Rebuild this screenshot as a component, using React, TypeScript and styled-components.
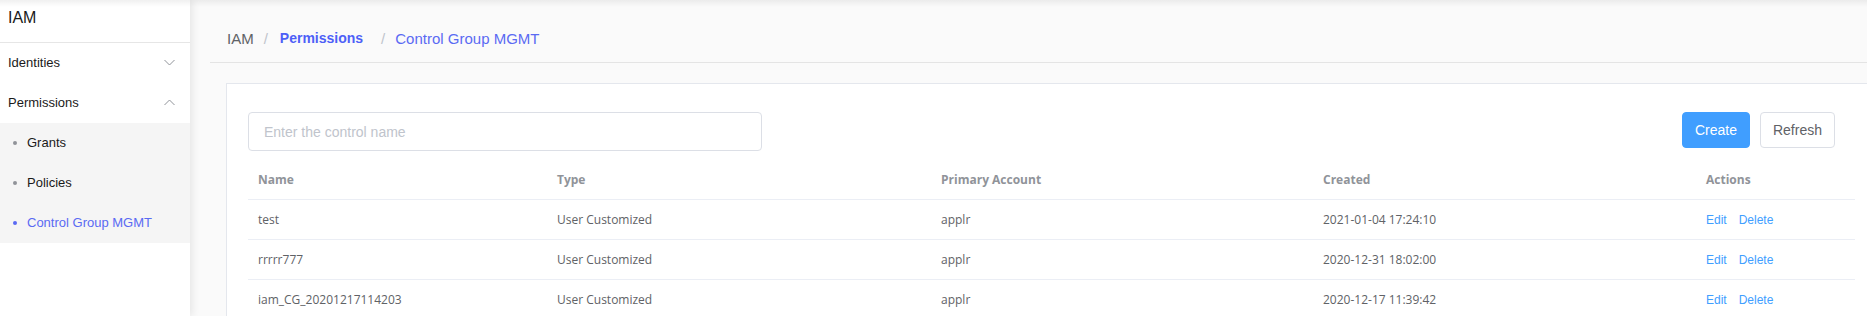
import styled, { createGlobalStyle } from "styled-components";

const GlobalStyle = createGlobalStyle`
  html, body {
    margin: 0;
    padding: 0;
    background: #fafafa;
    overflow: hidden;
  }
  * {
    box-sizing: border-box;
  }
`;

const rows = [
  { name: "test", type: "User Customized", account: "applr", created: "2021-01-04 17:24:10" },
  { name: "rrrrr777", type: "User Customized", account: "applr", created: "2020-12-31 18:02:00" },
  { name: "iam_CG_20201217114203", type: "User Customized", account: "applr", created: "2020-12-17 11:39:42" },
];

function Chevron({ up }: { up?: boolean }) {
  return (
    <svg width="11" height="7" viewBox="0 0 11 7">
      <polyline
        points={up ? "0.5,6 5.5,1 10.5,6" : "0.5,1 5.5,6 10.5,1"}
        fill="none"
        stroke="#909399"
        strokeWidth="1"
      />
    </svg>
  );
}

export default function App() {
  return (
    <Page>
      <GlobalStyle />
      <Sidebar>
        <Brand>IAM</Brand>
        <MenuItem>
          Identities
          <Chevron />
        </MenuItem>
        <MenuItem>
          Permissions
          <Chevron up />
        </MenuItem>
        <SubMenu>
          <SubItem>Grants</SubItem>
          <SubItem>Policies</SubItem>
          <SubItem $active>Control Group MGMT</SubItem>
        </SubMenu>
      </Sidebar>

      <Main>
        <Header>
          <Crumb>IAM</Crumb>
          <Sep>/</Sep>
          <Crumb $bold>Permissions</Crumb>
          <Sep>/</Sep>
          <Crumb $current>Control Group MGMT</Crumb>
        </Header>

        <Card>
          <Toolbar>
            <SearchInput placeholder="Enter the control name" />
            <Buttons>
              <Button $primary>Create</Button>
              <Button>Refresh</Button>
            </Buttons>
          </Toolbar>

          <Table>
            <HeadRow>
              <Cell>Name</Cell>
              <Cell>Type</Cell>
              <Cell>Primary Account</Cell>
              <Cell>Created</Cell>
              <Cell>Actions</Cell>
            </HeadRow>
            {rows.map((r) => (
              <Row key={r.name}>
                <Cell>{r.name}</Cell>
                <Cell>{r.type}</Cell>
                <Cell>{r.account}</Cell>
                <Cell>{r.created}</Cell>
                <Cell>
                  <LinkBtn>Edit</LinkBtn>
                  <LinkBtn>Delete</LinkBtn>
                </Cell>
              </Row>
            ))}
          </Table>
        </Card>
      </Main>
    </Page>
  );
}

const Page = styled.div`
  position: relative;
  display: flex;
  height: 316px;
  overflow: hidden;
  font-family: "Liberation Sans", Arial, sans-serif;

  &::before {
    content: "";
    position: absolute;
    left: 0;
    right: 0;
    top: 0;
    height: 7px;
    background: linear-gradient(rgba(0, 0, 0, 0.06), rgba(0, 0, 0, 0));
    z-index: 5;
    pointer-events: none;
  }
`;

const Sidebar = styled.aside`
  width: 190px;
  flex-shrink: 0;
  background: #fff;
  box-shadow: 2px 0 8px rgba(0, 0, 0, 0.09);
  z-index: 2;
`;

const Brand = styled.div`
  height: 43px;
  padding: 9px 0 0 8px;
  font-size: 16px;
  color: #1a1a1a;
  border-bottom: 1px solid #e6e6e6;
`;

const MenuItem = styled.div`
  height: 40px;
  display: flex;
  align-items: center;
  justify-content: space-between;
  padding: 0 15px 1px 8px;
  font-size: 13px;
  color: #1a1a1a;
`;

const SubMenu = styled.div`
  background: #f5f5f5;
`;

const SubItem = styled.div<{ $active?: boolean }>`
  height: 40px;
  display: flex;
  align-items: center;
  padding: 0 0 1px 27px;
  position: relative;
  font-size: 13px;
  color: ${(p) => (p.$active ? "#5a6af3" : "#1a1a1a")};

  &::before {
    content: "";
    position: absolute;
    left: 13px;
    top: 18px;
    width: 4px;
    height: 4px;
    border-radius: 50%;
    background: ${(p) => (p.$active ? "#5a6af3" : "#909399")};
  }
`;

const Main = styled.main`
  flex: 1;
  min-width: 0;
  background: #fafafa;
`;

const Header = styled.div`
  height: 63px;
  margin-left: 20px;
  padding: 14px 0 0 17px;
  display: flex;
  align-items: center;
  border-bottom: 1px solid #e4e4e4;
`;

const Crumb = styled.span<{ $bold?: boolean; $current?: boolean }>`
  font-size: ${(p) => (p.$bold ? "14px" : "15px")};
  font-weight: ${(p) => (p.$bold ? 700 : 400)};
  margin: ${(p) => (p.$bold ? "0 8px 0 2px" : "0")};
  color: ${(p) => (p.$bold ? "#4d5ff7" : p.$current ? "#5a6af3" : "#606266")};
`;

const Sep = styled.span`
  margin: 0 10px;
  font-size: 15px;
  color: #c0c4cc;
`;

const Card = styled.section`
  margin: 20px 0 0 36px;
  width: 1651px;
  background: #fff;
  border: 1px solid #e4e7ed;
  padding: 28px 21px 40px;
`;

const Toolbar = styled.div`
  display: flex;
  align-items: flex-start;
  justify-content: space-between;
`;

const SearchInput = styled.input`
  width: 514px;
  height: 39px;
  padding: 0 15px;
  border: 1px solid #dcdfe6;
  border-radius: 4px;
  font-family: "Liberation Sans", Arial, sans-serif;
  font-size: 14px;
  color: #606266;
  outline: none;

  &::placeholder {
    color: #c0c4cc;
  }
`;

const Buttons = styled.div`
  display: flex;
  gap: 10px;
  margin-right: 20px;
`;

const Button = styled.button<{ $primary?: boolean }>`
  height: 36px;
  padding: 0 12px;
  border-radius: 4px;
  font-family: "Liberation Sans", Arial, sans-serif;
  font-size: 14px;
  border: 1px solid ${(p) => (p.$primary ? "#409eff" : "#dcdfe6")};
  background: ${(p) => (p.$primary ? "#409eff" : "#fff")};
  color: ${(p) => (p.$primary ? "#fff" : "#606266")};
`;

const Table = styled.div`
  margin-top: 9px;
  font-family: "Open Sans", sans-serif;
  font-size: 12px;
`;

const Row = styled.div`
  display: grid;
  grid-template-columns: 299px 384px 382px 383px 1fr;
  height: 40px;
  align-items: center;
  border-bottom: 1px solid #ebeef5;
  color: #606266;
`;

const HeadRow = styled(Row)`
  font-weight: 700;
  color: #909399;
`;

const Cell = styled.div`
  padding-left: 10px;
  white-space: nowrap;
`;

const LinkBtn = styled.span`
  font-family: "Liberation Sans", Arial, sans-serif;
  font-size: 12px;
  color: #409eff;
  margin-right: 12px;
`;
